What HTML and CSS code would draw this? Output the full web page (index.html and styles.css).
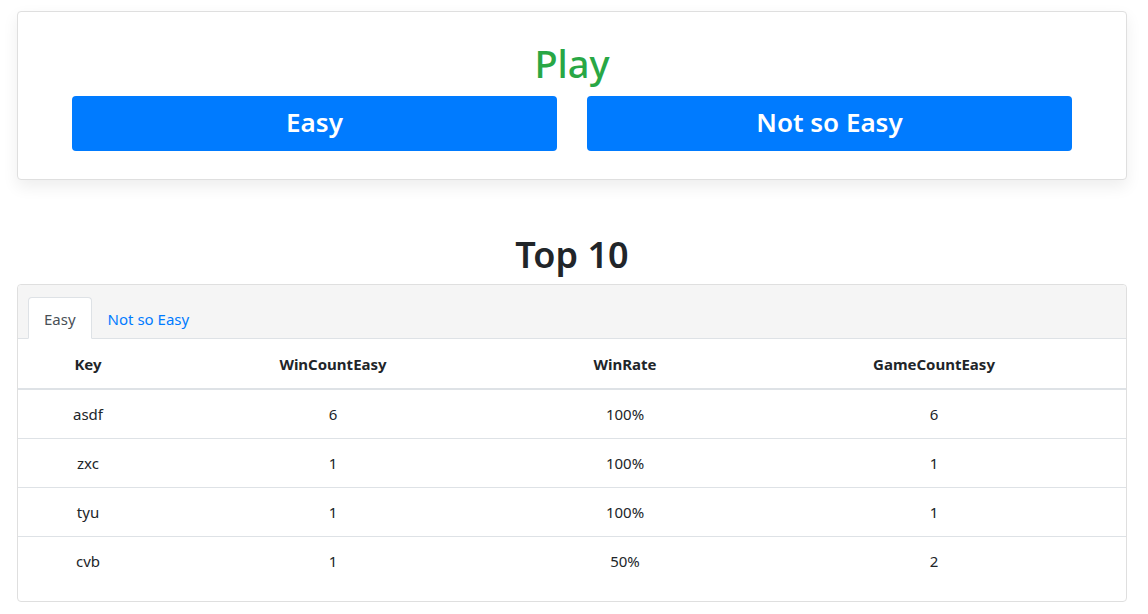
FILE: index.html
```html
<!DOCTYPE html>
<html>
<head>
<meta charset="utf-8">
<link rel="stylesheet" href="styles.css">
</head>
<body>
<div class="page">
  <section class="card play-card">
    <h1 class="play-title">Play</h1>
    <div class="btn-row">
      <button class="btn">Easy</button>
      <button class="btn">Not so Easy</button>
    </div>
  </section>

  <h1 class="top-title">Top 10</h1>

  <section class="card board">
    <div class="board-header">
      <ul class="tabs">
        <li class="tab active">Easy</li>
        <li class="tab">Not so Easy</li>
      </ul>
    </div>
    <table class="table">
      <colgroup>
        <col class="c1"><col class="c2"><col class="c3"><col class="c4">
      </colgroup>
      <thead>
        <tr><th>Key</th><th>WinCountEasy</th><th>WinRate</th><th>GameCountEasy</th></tr>
      </thead>
      <tbody>
        <tr><td>asdf</td><td>6</td><td>100%</td><td>6</td></tr>
        <tr><td>zxc</td><td>1</td><td>100%</td><td>1</td></tr>
        <tr><td>tyu</td><td>1</td><td>100%</td><td>1</td></tr>
        <tr><td>cvb</td><td>1</td><td>50%</td><td>2</td></tr>
      </tbody>
    </table>
  </section>
</div>
</body>
</html>
```

FILE: styles.css
```css
* { box-sizing: border-box; }
html, body { margin: 0; padding: 0; background: #fff; }
body {
  font-family: "Noto Sans", "Open Sans", "Liberation Sans", sans-serif;
  color: #212529;
  font-size: 15px;
}
.page {
  width: 1110px;
  margin-left: 17px;
  padding-top: 11px;
}
.card {
  border: 1px solid #dfdfdf;
  border-radius: 4px;
  background: #fff;
}
.play-card {
  padding: 30px 54px 28px;
  box-shadow: 0 0.4rem 1rem rgba(0,0,0,0.07);
}
.play-title {
  margin: 0 0 10px;
  text-align: center;
  color: #28a745;
  font-size: 38px;
  font-weight: 500;
  line-height: 1.15;
}
.btn-row {
  display: flex;
  gap: 30px;
}
.btn {
  flex: 1;
  height: 55px;
  border: none;
  border-radius: 4px;
  background: #007bff;
  color: #fff;
  font-family: inherit;
  font-size: 26px;
  font-weight: 600;
  padding: 0 0 3px;
}
.top-title {
  margin: 54px 0 9px;
  text-align: center;
  font-size: 36px;
  font-weight: 600;
  line-height: 1.15;
}
.board {
  padding-bottom: 16px;
}
.board-header {
  background: #f5f5f5;
  border-bottom: 1px solid #dee2e6;
  padding: 12px 10px 0;
  border-radius: 4px 4px 0 0;
}
.tabs {
  display: flex;
  list-style: none;
  margin: 0 0 -1px;
  padding: 0;
}
.tab {
  padding: 0 15px;
  height: 42px;
  line-height: 42px;
  color: #007bff;
  border: 1px solid transparent;
  border-radius: 4px 4px 0 0;
}
.tab.active {
  color: #495057;
  background: #fff;
  border-color: #dee2e6 #dee2e6 #fff;
}
.table {
  width: 100%;
  border-collapse: collapse;
  table-layout: fixed;
}
.c1 { width: 140px; }
.c2 { width: 350px; }
.c3 { width: 234px; }
.c4 { width: auto; }
.table th, .table td {
  text-align: center;
  padding: 0;
}
.table th {
  height: 50px;
  font-weight: 700;
  border-bottom: 2px solid #dee2e6;
}
.table td {
  height: 49px;
  border-top: 1px solid #dee2e6;
}
.table tbody tr:first-child td { border-top: none; }
```
